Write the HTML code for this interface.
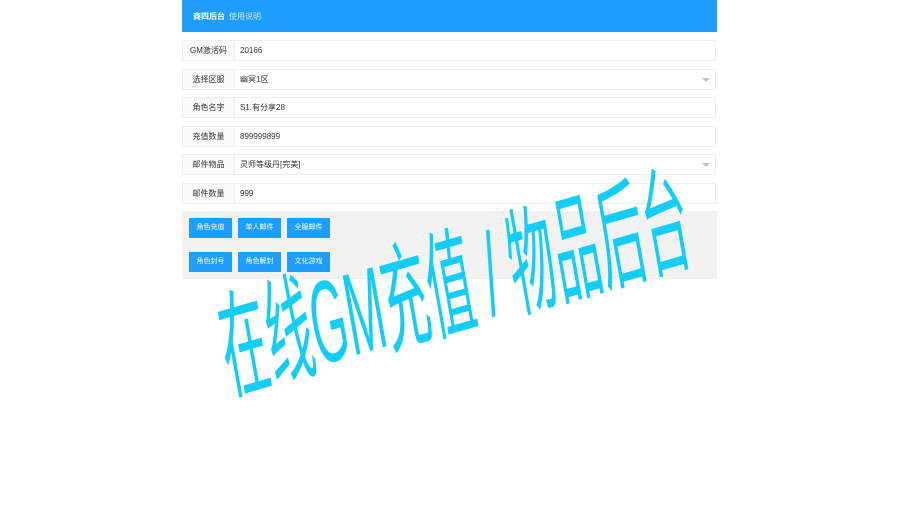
<!DOCTYPE html>
<html><head><meta charset="utf-8"><style>
body{margin:0;width:900px;height:506px;background:#fff;overflow:hidden;position:relative;font-family:"Liberation Sans","Noto Sans CJK SC",sans-serif;font-size:8px;color:#333}
.hd{position:absolute;left:182px;top:0;width:535px;height:32px;background:#1e9fff}
.hd b{position:absolute;left:11px;top:11px;color:#fff;font-size:8px}
.hd span{position:absolute;left:47px;top:11px;color:#cfe8ff;font-size:8px}
.row{position:absolute;left:182px;width:534px;height:21px;border:1px solid #eee;background:#fff;box-sizing:border-box}
.row .l{position:absolute;left:0;top:0;width:51px;height:19px;background:#fafafa;border-right:1px solid #eee;text-align:center;line-height:19px}
.row .v{position:absolute;left:57px;top:0;line-height:19px}
.row .a{position:absolute;right:5px;top:8px;border:4px solid transparent;border-top-color:#c2c2c2;border-bottom:0}
.pn{position:absolute;left:182px;top:211px;width:535px;height:68px;background:#f2f2f2}
.bt{position:absolute;width:43px;height:20px;background:#1e9fff;color:#fff;text-align:center;line-height:20px;font-size:7px}
.wm{position:absolute;left:455px;top:285px;transform:translate(-50%,-50%) rotate(-16deg) skewX(-6deg) scaleX(0.4);font-size:116px;white-space:nowrap;color:#14cdf5;text-shadow:0 0 2px #fff;font-family:"Liberation Sans","Noto Sans CJK SC",sans-serif;line-height:1}
</style></head><body>
<div class="hd"><b>商四后台</b><span>使用说明</span></div>
<div class="row" style="top:40px"><div class="l">GM激活码</div><div class="v">20166</div></div>
<div class="row" style="top:69px"><div class="l">选择区服</div><div class="v">幽冥1区</div><div class="a"></div></div>
<div class="row" style="top:97px"><div class="l">角色名字</div><div class="v">S1.有分享28</div></div>
<div class="row" style="top:126px"><div class="l">充值数量</div><div class="v">899999899</div></div>
<div class="row" style="top:154px"><div class="l">邮件物品</div><div class="v">灵师等级丹[完美]</div><div class="a"></div></div>
<div class="row" style="top:183px"><div class="l">邮件数量</div><div class="v">999</div></div>
<div class="pn"></div>
<div class="bt" style="left:189px;top:218px">角色充值</div>
<div class="bt" style="left:238px;top:218px">单人邮件</div>
<div class="bt" style="left:287px;top:218px">全服邮件</div>
<div class="bt" style="left:189px;top:252px">角色封号</div>
<div class="bt" style="left:238px;top:252px">角色解封</div>
<div class="bt" style="left:287px;top:252px">文化游戏</div>
<div class="wm">在线GM充值 / 物品后台</div>
</body></html>
